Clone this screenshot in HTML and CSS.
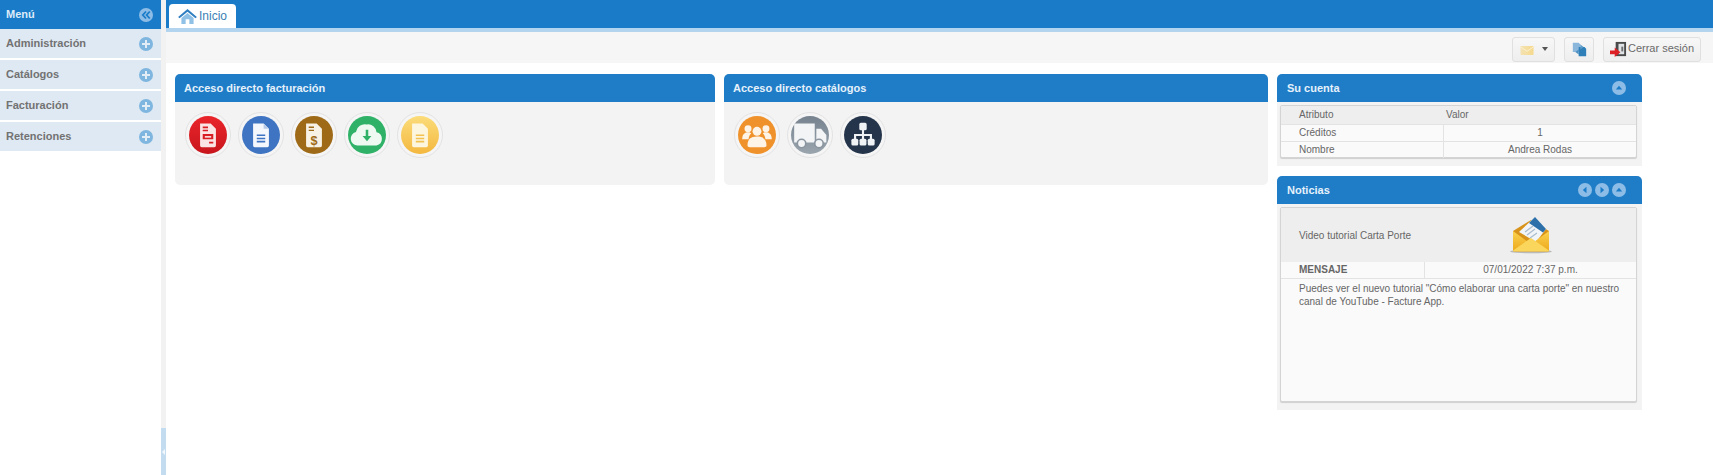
FILE: index.html
```html
<!DOCTYPE html>
<html lang="es">
<head>
<meta charset="utf-8">
<title>Inicio</title>
<link rel="stylesheet" href="styles.css">
</head>
<body>
<div class="app">
  <aside class="sidebar">
    <div class="menu-head"><span>Menú</span>
      <svg class="ico14" viewBox="0 0 14 14"><circle cx="7" cy="7" r="7" fill="#8dbde6"/><path d="M7 3.500 3.800 7 7 10.500M10.800 3.500 7.600 7l3.200 3.500" fill="none" stroke="#1a7cc9" stroke-width="1.800"/></svg>
    </div>
    <div class="menu-item"><span>Administración</span><svg class="ico14" viewBox="0 0 14 14"><use href="#plus"/></svg></div>
    <div class="menu-item"><span>Catálogos</span><svg class="ico14" viewBox="0 0 14 14"><use href="#plus"/></svg></div>
    <div class="menu-item"><span>Facturación</span><svg class="ico14" viewBox="0 0 14 14"><use href="#plus"/></svg></div>
    <div class="menu-item"><span>Retenciones</span><svg class="ico14" viewBox="0 0 14 14"><use href="#plus"/></svg></div>
  </aside>
  <div class="splitter"><div class="grip"><i></i></div></div>
  <main class="main">
    <div class="tabbar">
      <div class="tab">
        <svg class="home" viewBox="0 0 20 16"><path d="M10 0 0 8.500l1.500 1.300L10 3l8.500 6.800L20 8.500z" fill="#2f7fc1"/><path d="M3.500 9.500 10 4.300l6.500 5.200V16h-4.500v-5H8v5H3.500z" fill="#8fc0e6"/></svg>
        <span>Inicio</span>
      </div>
    </div>
    <div class="toolbar">
      <div class="btn btn-mail">
        <svg class="mail" viewBox="0 0 16 11"><defs><linearGradient id="ml" x1="0" y1="0" x2="1" y2="0"><stop offset="0" stop-color="#f3e2b4"/><stop offset="1" stop-color="#f6d98c"/></linearGradient></defs><rect width="16" height="11" rx="1" fill="url(#ml)"/><path d="M0 1 8 6.500 16 1" fill="none" stroke="#fbf0d0" stroke-width="1.200"/></svg>
        <i class="caret"></i>
      </div>
      <div class="btn btn-sync">
        <svg class="sync" viewBox="0 0 18 18"><path d="M1 1h7l2 2v9H1z" fill="#8ab6dc"/><path d="M8 6h7l2 2v9H8z" fill="#2f80b8"/><path d="M10 3 14 6l-4 3z" fill="#5f9cc9"/><path d="M8 15 4 12l4-3z" fill="#4d90c2"/></svg>
      </div>
      <div class="btn btn-out">
        <svg class="out" viewBox="0 0 18 18"><rect x="6" y="1" width="11" height="15" fill="#4a4a4a"/><rect x="9" y="3" width="6" height="11" fill="#dfe3e6"/><path d="M12 6h2v5h-2z" fill="#6c6c6c"/><path d="M0 10h5V7l6 5-6 5v-3H0z" fill="#dc2026"/></svg>
        <span>Cerrar sesión</span>
      </div>
    </div>
    <div class="content">
      <section class="panel p-fact">
        <h2 class="panel-head">Acceso directo facturación</h2>
        <div class="shortcuts">
          <div class="ring"><svg viewBox="0 0 36 36"><defs><linearGradient id="gr" x1="0" y1="0" x2="0" y2="1"><stop offset="0" stop-color="#e9252b"/><stop offset="1" stop-color="#c8161c"/></linearGradient></defs><circle cx="18" cy="18" r="18" fill="url(#gr)"/><path d="M10.500 7h10l5 5v16a1.500 1.500 0 0 1-1.500 1.500H12a1.500 1.500 0 0 1-1.500-1.500z" fill="#fbe4e4"/><path d="M13 10h5v1.500h-5zM13 13h5v1.500h-5zM13 17h10v5H13zM19 24.500h4V26h-4z" fill="#d81e24"/><path d="M15 19h6v1.500h-6z" fill="#fbe4e4"/></svg></div>
          <div class="ring"><svg viewBox="0 0 36 36"><circle cx="18" cy="18" r="18" fill="#3f74c2"/><path d="M10.500 7h10l5 5v16a1.500 1.500 0 0 1-1.500 1.500H12a1.500 1.500 0 0 1-1.500-1.500z" fill="#f4f7fc"/><path d="M20.500 7v5h5z" fill="#b7cbe9"/><path d="M14 17.500h8V19h-8zM14 20.500h8V22h-8zM14 23.500h8V25h-8z" fill="#3f74c2"/></svg></div>
          <div class="ring"><svg viewBox="0 0 36 36"><circle cx="18" cy="18" r="18" fill="#9e6a17"/><path d="M10.500 7h10l5 5v16a1.500 1.500 0 0 1-1.500 1.500H12a1.500 1.500 0 0 1-1.500-1.500z" fill="#f7f1e6"/><path d="M13 10h5v1.300h-5zM13 13h5v1.300h-5z" fill="#9e6a17"/><text x="18" y="27" class="dollar">$</text></svg></div>
          <div class="ring"><svg viewBox="0 0 36 36"><circle cx="18" cy="18" r="18" fill="#2fb267"/><path d="M9 28a6.500 6.500 0 0 1-1.500-12.800A8.500 8.500 0 0 1 18 8a8 8 0 0 1 9 7.300A6.500 6.500 0 0 1 27 28z" fill="#eef9f2"/><path d="M16.800 13h2.400v6h3L18 24l-4.200-5h3z" fill="#2fb267"/></svg></div>
          <div class="ring"><svg viewBox="0 0 36 36"><defs><linearGradient id="gy" x1="0" y1="0" x2="0" y2="1"><stop offset="0" stop-color="#fbdc7a"/><stop offset="1" stop-color="#f4b83f"/></linearGradient></defs><circle cx="18" cy="18" r="18" fill="url(#gy)"/><path d="M10.500 7h10l5 5v16a1.500 1.500 0 0 1-1.500 1.500H12a1.500 1.500 0 0 1-1.500-1.500z" fill="#fdf6df"/><path d="M14 17.500h8V19h-8zM14 20.500h8V22h-8zM14 23.500h8V25h-8z" fill="#f2c150"/></svg></div>
        </div>
      </section>
      <section class="panel p-cat">
        <h2 class="panel-head">Acceso directo catálogos</h2>
        <div class="shortcuts">
          <div class="ring"><svg viewBox="0 0 36 36"><circle cx="18" cy="18" r="18" fill="#f0922b"/><g fill="#fdf3e6"><circle cx="9.500" cy="12" r="3.300"/><circle cx="26.500" cy="12" r="3.300"/><circle cx="18" cy="14.500" r="4.200"/><path d="M4 22c0-5 3-6.500 5.500-6.500 1.500 0 2.500.5 3 1-1.500 1.200-2.300 3-2.500 5.500zM32 22c0-5-3-6.500-5.500-6.500-1.500 0-2.500.5-3 1 1.500 1.200 2.300 3 2.500 5.500z"/><path d="M9 28c0-6 3-8.500 9-8.500s9 2.500 9 8.500c0 1-1 1.500-2 1.500H11c-1 0-2-.5-2-1.500z"/></g></svg></div>
          <div class="ring"><svg viewBox="0 0 36 36"><defs><linearGradient id="gt" x1="0" y1="0" x2="0" y2="1"><stop offset="0" stop-color="#76838f"/><stop offset="1" stop-color="#9aa5ae"/></linearGradient></defs><circle cx="18" cy="18" r="18" fill="url(#gt)"/><path d="M3 7h19.500v18H3zM24 12h4.500l5 6v7H24z" fill="#f2f4f5"/><circle cx="10" cy="26" r="4" fill="#f2f4f5" stroke="#8a95a0" stroke-width="1.500"/><circle cx="26.500" cy="26" r="4" fill="#f2f4f5" stroke="#8a95a0" stroke-width="1.500"/></svg></div>
          <div class="ring"><svg viewBox="0 0 36 36"><circle cx="18" cy="18" r="18" fill="#24344a"/><path d="M17 13h2v4h7.500v5h-2v-3H19v3h-2v-3h-5.500v3h-2v-5H17z" fill="#f0f3f6"/><g fill="#f0f3f6"><rect x="14.500" y="6.500" width="7" height="7" rx="1.500"/><rect x="7" y="21.500" width="6.500" height="6.500" rx="1.500"/><rect x="14.750" y="21.500" width="6.500" height="6.500" rx="1.500"/><rect x="22.500" y="21.500" width="6.500" height="6.500" rx="1.500"/></g></svg></div>
        </div>
      </section>
      <div class="side">
        <section class="panel p-account">
          <h2 class="panel-head"><span>Su cuenta</span><svg class="ico14" viewBox="0 0 14 14"><use href="#up"/></svg></h2>
          <div class="account-box">
            <div class="row row-head"><div class="c1">Atributo</div><div class="c2 left">Valor</div></div>
            <div class="row"><div class="c1">Créditos</div><div class="c2">1</div></div>
            <div class="row"><div class="c1">Nombre</div><div class="c2">Andrea Rodas</div></div>
          </div>
        </section>
        <section class="panel p-news">
          <h2 class="panel-head"><span>Noticias</span>
            <span class="head-icons">
              <svg class="ico14" viewBox="0 0 14 14"><circle cx="7" cy="7" r="7" fill="#8dbde6"/><path d="M8.500 3.800 4.800 7l3.700 3.200z" fill="#1a7cc9"/></svg>
              <svg class="ico14" viewBox="0 0 14 14"><circle cx="7" cy="7" r="7" fill="#8dbde6"/><path d="M5.500 3.800 9.200 7l-3.700 3.200z" fill="#1a7cc9"/></svg>
              <svg class="ico14" viewBox="0 0 14 14"><use href="#up"/></svg>
            </span>
          </h2>
          <div class="news-box">
            <div class="news-top">
              <span class="news-title">Video tutorial Carta Porte</span>
              <svg class="envelope" viewBox="0 0 42 38">
                <defs><linearGradient id="env" x1="0" y1="0" x2="0" y2="1"><stop offset="0" stop-color="#fbd24e"/><stop offset="1" stop-color="#eda91c"/></linearGradient></defs>
                <ellipse cx="21" cy="35.500" rx="21" ry="1.800" fill="#b9b9b9"/>
                <path d="M3 15 21 4l18 11v19a1.500 1.500 0 0 1-1.500 1.500h-33A1.500 1.500 0 0 1 3 34z" fill="#d8931a"/>
                <path d="M9 16 25 1l11 12-10 13z" fill="#f2f5f8"/>
                <path d="M19 7 25 1l11 12-3 3.500z" fill="#2d6fa8"/>
                <path d="M15 16l8-6M17 19l8-6M20 22l7-5" stroke="#a9bdcf" stroke-width="1.300"/>
                <path d="M3 15l15 11-15 9zM39 15 24 26l15 9z" fill="url(#env)"/>
                <path d="M3 34.500 21 22l18 12.500a1 1 0 0 1-1 1H4a1 1 0 0 1-1-1z" fill="#fbd65c"/>
              </svg>
            </div>
            <div class="news-row"><div class="n1">MENSAJE</div><div class="n2">07/01/2022 7:37 p.m.</div></div>
            <p class="news-text">Puedes ver el nuevo tutorial "Cómo elaborar una carta porte" en nuestro canal de YouTube - Facture App.</p>
          </div>
        </section>
      </div>
    </div>
  </main>
</div>
<svg class="defs" aria-hidden="true">
  <symbol id="plus" viewBox="0 0 14 14"><circle cx="7" cy="7" r="7" fill="#7fb6df"/><path d="M6 3h2v3h3v2H8v3H6V8H3V6h3z" fill="#e3edf6"/></symbol>
  <symbol id="up" viewBox="0 0 14 14"><circle cx="7" cy="7" r="7" fill="#8dbde6"/><path d="M3.800 8.500 7 4.800l3.200 3.700z" fill="#1a7cc9"/></symbol>
</svg>
</body>
</html>
```

FILE: styles.css
```css
* { box-sizing: border-box; }
html, body { margin: 0; height: 100%; background: #fff; overflow: hidden; }
body { font-family: "Liberation Sans", Arial, sans-serif; font-size: 10px; color: #666; }
.defs { display: none; }
.ico14 { width: 14px; height: 14px; flex: none; display: block; }

.app { display: flex; height: 475px; }

.sidebar { width: 161px; flex: none; display: flex; flex-direction: column; gap: 2px; }
.menu-head, .menu-item { display: flex; align-items: center; justify-content: space-between; padding: 0 8px 0 6px; font-size: 11px; font-weight: bold; height: 29px; }
.menu-head span, .menu-item span { margin-top: -2px; }
.menu-head { background: #1a7cc9; color: #dcebf8; margin-bottom: -2px; }
.menu-item { background: #dfe9f3; color: #727272; }

.splitter { width: 5px; flex: none; background: #f2f2f2; display: flex; flex-direction: column; justify-content: flex-end; }
.grip { height: 47px; background: #c3dcf0; display: flex; align-items: center; justify-content: center; }
.grip i { border: 3px solid transparent; border-right-color: #f2f7fb; border-left: 0; }

.main { flex: 1; min-width: 0; display: flex; flex-direction: column; }
.tabbar { height: 32px; flex: none; background: #1a7cc9; border-bottom: 4px solid #b3d4ee; padding: 4px 0 0 3px; display: flex; }
.tab { width: 67px; height: 24px; background: #fff; border-radius: 4px 4px 0 0; display: flex; align-items: center; gap: 2px; padding: 0 0 0 9px; font-size: 12px; color: #3b7fb5; }
.home { width: 19px; height: 15px; display: block; }

.toolbar { height: 31px; flex: none; background: #f6f6f6; display: flex; justify-content: flex-end; align-items: center; gap: 9px; padding: 3px 12px 0 0; }
.btn { height: 25px; border: 1px solid #e0e0e0; border-radius: 3px; background: linear-gradient(#f7f7f7, #eeeeee); display: flex; align-items: center; justify-content: center; }
.btn-mail { width: 43px; gap: 8px; }
.mail { width: 14px; height: 9px; margin-top: 3px; display: block; }
.caret { border: 3px solid transparent; border-top: 4px solid #555; border-bottom: 0; }
.btn-sync { width: 30px; }
.sync { width: 15px; height: 15px; display: block; }
.btn-out { width: 98px; gap: 1px; font-size: 11px; color: #6a6a6a; padding-bottom: 2px; }
.out { width: 17px; height: 17px; display: block; margin-top: 3px; }

.content { display: flex; gap: 9px; padding: 11px 0 0 9px; align-items: flex-start; }
.panel { background: #f3f3f3; border-radius: 5px 5px 0 0; }
.panel-head { margin: 0; height: 28px; background: #1f7dc8; color: #e6f1fa; border-radius: 5px 5px 0 0; font-size: 11px; font-weight: bold; display: flex; align-items: center; justify-content: space-between; padding: 0 16px 0 9px; }
.p-fact { width: 540px; height: 111px; border-radius: 5px; }
.p-cat { width: 544px; height: 111px; border-radius: 5px; }
.shortcuts { display: flex; gap: 7px; padding: 10px 0 0 10px; }
.ring { width: 46px; height: 46px; border-radius: 50%; background: #f5f5f5; border: 1px solid #e3e3e3; padding: 3px; flex: none; }
.ring svg { width: 38px; height: 38px; display: block; }
.dollar { font-family: "Liberation Sans", sans-serif; font-size: 12px; font-weight: bold; fill: #9e6a17; text-anchor: middle; }

.side { width: 365px; flex: none; display: flex; flex-direction: column; gap: 10px; }
.side .panel-head { padding-left: 10px; }
.p-account { height: 92px; padding-bottom: 8px; }
.p-news { height: 234px; }
.head-icons { display: flex; gap: 3px; }
.account-box { margin: 3px 5px 0 3px; height: 53px; border: 1px solid #d4d4d4; border-radius: 2px; background: #fafafa; box-shadow: 0 1px 1px #cfcfcf; }
.row { display: flex; height: 17px; border-top: 1px solid #e3e3e3; line-height: 16px; }
.row-head { height: 18px; border-top: 0; background: #eeeeee; line-height: 18px; }
.c1 { width: 162px; padding-left: 18px; }
.c2 { flex: 1; text-align: center; border-left: 1px solid #e3e3e3; }
.c2.left { text-align: left; border-left: 0; padding-left: 3px; }

.news-box { margin: 3px 5px 0 3px; height: 195px; border: 1px solid #d4d4d4; border-radius: 2px; background: #fafafa; box-shadow: 0 1px 1px #cfcfcf; }
.news-top { height: 54px; background: #eeeeee; display: flex; align-items: center; padding-left: 18px; }
.news-title { width: 211px; }
.envelope { width: 42px; height: 38px; display: block; }
.news-row { display: flex; height: 17px; border-bottom: 1px solid #e3e3e3; line-height: 16px; }
.n1 { width: 143px; padding-left: 18px; font-weight: bold; }
.n2 { flex: 1; text-align: center; border-left: 1px solid #e3e3e3; }
.news-text { margin: 3px 0 0; padding: 0 15px 0 18px; line-height: 13px; }
```
